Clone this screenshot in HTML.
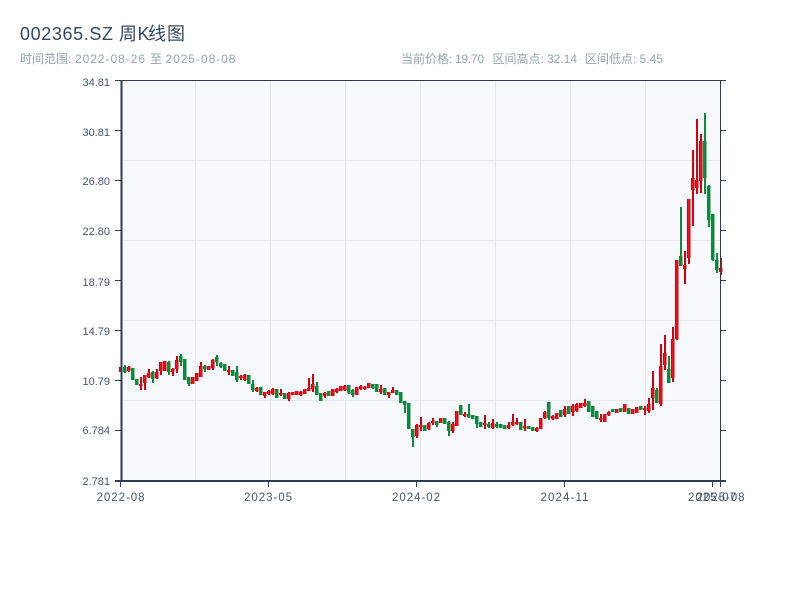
<!DOCTYPE html>
<html lang="zh">
<head>
<meta charset="utf-8">
<title>002365.SZ 周K线图</title>
<style>
html,body{margin:0;padding:0;background:#fff;width:800px;height:600px;overflow:hidden}
svg{display:block;font-family:"Liberation Sans","Noto Sans CJK SC",sans-serif}
.t{fill:#34495e;font-size:18px}
.s{fill:#95a5a6;font-size:12px}
.a{fill:#46566a;font-size:11px}
.x{fill:#46566a;font-size:11.500px}
</style>
</head>
<body>
<svg width="800" height="600" viewBox="0 0 800 600" xmlns="http://www.w3.org/2000/svg">
<rect width="800" height="600" fill="#fff"/>
<text class="t" x="20" y="40" textLength="93" lengthAdjust="spacing">002365.SZ</text>
<text class="t" x="119" y="40">周</text>
<text class="t" x="137.500" y="40">K</text>
<text class="t" x="148" y="40">线</text>
<text class="t" x="167" y="40">图</text>

<text class="s" x="20" y="63">时间范围:</text>
<text class="s" x="75" y="63" textLength="70" lengthAdjust="spacing">2022-08-26</text>
<text class="s" x="150" y="63">至</text>
<text class="s" x="165.500" y="63" textLength="70" lengthAdjust="spacing">2025-08-08</text>
<text class="s" x="401" y="63">当前价格:</text>
<text class="s" x="455" y="63" textLength="29" lengthAdjust="spacing">19.70</text>
<text class="s" x="492.500" y="63">区间高点:</text>
<text class="s" x="547" y="63" textLength="30" lengthAdjust="spacing">32.14</text>
<text class="s" x="585" y="63">区间低点:</text>
<text class="s" x="639.500" y="63" textLength="23.500" lengthAdjust="spacing">5.45</text>

<rect x="120" y="80" width="600" height="400" fill="#f7f9fc"/>
<path d="M195.500 80V480M270.500 80V480M345.500 80V480M420.500 80V480M495.500 80V480M570.500 80V480M645.500 80V480M120 160.500H720M120 240.500H720M120 320.500H720M120 400.500H720" stroke="#e4e7ec" stroke-width="1" fill="none"/>

<defs>
<path id="rb" d="M120.500 367V372M128.500 367V371M140.500 384V386M144.500 375V383M148.500 373V377M156.500 372V378M160.500 362V371M164.500 361V371M172.500 369V372M176.500 360V369M192.500 377V384M196.500 373V381M200.500 366V377M208.500 366V370M212.500 360V368M228.500 370V372M240.500 376V378M244.500 375V380M256.500 388V391M264.500 392V396M268.500 391V394M272.500 389V394M280.500 393V395M288.500 393V399M292.500 392V395M296.500 391V395M300.500 392V395M304.500 389V394M308.500 388V391M312.500 384V389M324.500 393V396M332.500 389V396M336.500 389V392M340.500 386V391M344.500 386V390M356.500 387V395M360.500 386V389M364.500 387V389M368.500 383V388M380.500 389V392M388.500 392V395M392.500 390V393M416.500 425V436M420.500 425V427M428.500 423V429M432.500 421V423M440.500 418V423M452.500 424V431M456.500 411V426M464.500 414V416M484.500 423V425M492.500 423V428M508.500 425V428M512.500 422V425M516.500 422V424M524.500 426V428M536.500 428V431M540.500 418V429M544.500 412V418M552.500 416V419M556.500 413V419M564.500 409V415M572.500 406V412M576.500 404V411M580.500 403V408M584.500 403V406M600.500 418V420M604.500 414V422M608.500 412V415M616.500 409V413M624.500 404V412M632.500 409V414M636.500 407V413M644.500 408V410M648.500 404V411M652.500 388V398M660.500 366V404M664.500 353V365M672.500 339V378M676.500 260V339M684.500 265V269M688.500 199V258M692.500 178V190M696.500 180V188M700.500 141V181M720.500 268V272"/>
</defs>

<g fill="none">
<path transform="translate(.5 0)" stroke="#0a8a3a" stroke-width="2" d="M124.500 365V373M132.500 368V380M136.500 379V385M152.500 371V383M168.500 361V375M180.500 354V366M184.500 359V380M188.500 377V386M204.500 365V372M216.500 355V366M220.500 362V368M224.500 364V371M232.500 370V376M236.500 366V382M248.500 375V384M252.500 380V392M260.500 387V395M276.500 389V398M284.500 393V399M316.500 382V395M320.500 393V401M328.500 391V396M348.500 385V394M352.500 389V397M372.500 384V389M376.500 384V392M384.500 388V395M396.500 390V395M400.500 392V403M404.500 401V413M408.500 403V429M412.500 429V447M424.500 425V431M436.500 421V427M444.500 418V424M448.500 421V436M460.500 405V415M468.500 404V418M472.500 415V419M476.500 416V428M480.500 422V427M488.500 422V428M496.500 422V428M500.500 424V428M504.500 425V429M520.500 422V430M528.500 426V429M532.500 427V431M548.500 402V420M560.500 410V417M568.500 406V414M588.500 401V412M592.500 406V417M596.500 411V419M612.500 409V412M620.500 408V412M628.500 408V414M640.500 406V410M656.500 388V403M668.500 356V383M680.500 207V266M704.500 113V194M708.500 185V227M712.500 214V261M716.500 253V273"/>
<path transform="translate(.25 0)" stroke="#0a8a3a" stroke-width="3.500" d="M124.500 367V372M132.500 368V380M136.500 379V385M152.500 372V379M168.500 362V372M180.500 356V362M184.500 359V380M188.500 377V384M204.500 366V369M216.500 357V362M220.500 363V367M224.500 364V371M232.500 370V376M236.500 372V380M248.500 375V384M252.500 384V390M260.500 387V395M276.500 389V398M284.500 393V399M316.500 386V395M320.500 393V401M328.500 391V396M348.500 385V393M352.500 390V395M372.500 384V388M376.500 384V392M384.500 388V395M396.500 390V395M400.500 392V403M404.500 401V405M408.500 403V429M412.500 429V437M424.500 425V431M436.500 421V425M444.500 418V424M448.500 422V431M460.500 405V415M468.500 414V417M472.500 415V419M476.500 416V424M480.500 422V427M488.500 424V427M496.500 424V427M500.500 424V428M504.500 425V429M520.500 422V430M528.500 426V429M532.500 427V431M548.500 402V418M560.500 410V417M568.500 406V414M588.500 401V412M592.500 406V417M596.500 411V419M612.500 409V412M620.500 408V412M628.500 408V414M640.500 406V410M656.500 390V403M668.500 369V383M680.500 256V266M704.500 141V178M708.500 186V220M712.500 214V260M716.500 260V270"/>
<path transform="translate(.5 0)" stroke="#d5000d" stroke-width="2" d="M120.500 367V372M128.500 366V372M140.500 377V390M144.500 375V390M148.500 369V378M156.500 369V379M160.500 362V375M164.500 361V371M172.500 368V376M176.500 356V373M192.500 377V384M196.500 373V381M200.500 362V377M208.500 366V370M212.500 359V370M228.500 366V375M240.500 375V380M244.500 374V381M256.500 387V392M264.500 392V398M268.500 390V395M272.500 388V395M280.500 389V396M288.500 392V401M292.500 392V395M296.500 391V395M300.500 391V396M304.500 389V394M308.500 378V391M312.500 374V392M324.500 392V398M332.500 389V396M336.500 388V393M340.500 386V391M344.500 385V391M356.500 387V395M360.500 385V390M364.500 386V390M368.500 383V388M380.500 385V394M388.500 392V398M392.500 387V393M416.500 424V438M420.500 417V431M428.500 422V430M432.500 418V425M440.500 418V423M452.500 422V433M456.500 411V426M464.500 412V417M484.500 415V429M492.500 419V429M508.500 422V429M512.500 414V426M516.500 418V425M524.500 419V431M536.500 427V432M540.500 418V429M544.500 411V419M552.500 415V420M556.500 413V419M564.500 406V417M572.500 404V416M576.500 403V412M580.500 403V408M584.500 399V407M600.500 414V422M604.500 414V422M608.500 411V416M616.500 409V413M624.500 404V412M632.500 409V414M636.500 407V413M644.500 406V415M648.500 398V413M652.500 371V410M660.500 344V406M664.500 335V370M672.500 327V382M676.500 260V340M684.500 251V284M688.500 199V264M692.500 150V226M696.500 119V194M700.500 134V193M720.500 258V275"/>
<g transform="translate(.25 0)" stroke="#d5000d" stroke-width="3.500"><use href="#rb"/></g>
<g transform="translate(.25 0)" stroke="#f31c24" stroke-width="1"><use href="#rb"/></g>
</g>

<g stroke="#2c3e50" fill="none">
<path stroke-width="2" d="M121.500 80V482M115 481H726"/>
<path stroke-width="1" d="M115 80.500H726M720.500 80V482"/>
<path stroke-width="1" d="M115 130.500H121M115 180.500H121M115 230.500H121M115 280.500H121M115 330.500H121M115 380.500H121M115 430.500H121M720 130.500H726M720 180.500H726M720 230.500H726M720 280.500H726M720 330.500H726M720 380.500H726M720 430.500H726M120.500 482V487M268.500 482V487M416.500 482V487M564.500 482V487M712.500 482V487M720.500 482V487"/>
</g>

<text class="a" text-anchor="end" x="110" y="86">34.81</text>
<text class="a" text-anchor="end" x="110" y="136">30.81</text>
<text class="a" text-anchor="end" x="110" y="185">26.80</text>
<text class="a" text-anchor="end" x="110" y="235">22.80</text>
<text class="a" text-anchor="end" x="110" y="286">18.79</text>
<text class="a" text-anchor="end" x="110" y="335">14.79</text>
<text class="a" text-anchor="end" x="110" y="385">10.79</text>
<text class="a" text-anchor="end" x="110" y="434">6.784</text>
<text class="a" text-anchor="end" x="110" y="485">2.781</text>

<text class="x" x="96.500" y="501" textLength="48" lengthAdjust="spacing">2022-08</text>
<text class="x" x="244" y="501" textLength="48" lengthAdjust="spacing">2023-05</text>
<text class="x" x="392" y="501" textLength="48" lengthAdjust="spacing">2024-02</text>
<text class="x" x="540.500" y="501" textLength="48" lengthAdjust="spacing">2024-11</text>
<text class="x" x="688" y="501" textLength="48" lengthAdjust="spacing">2025-07</text>
<text class="x" x="696.500" y="501" textLength="48" lengthAdjust="spacing">2025-08</text>
</svg>
</body>
</html>
